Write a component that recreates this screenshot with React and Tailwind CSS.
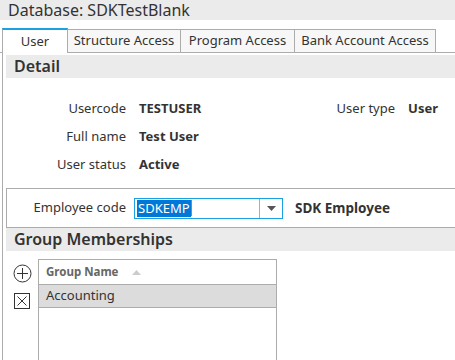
export default function App() {
  const font = { fontFamily: '"Noto Sans", "Open Sans", sans-serif' };
  return (
    <div className="w-[455px] h-[360px] overflow-hidden bg-white text-[#333]" style={font}>
      <div className="h-[20px] bg-[#ebebeb] pl-[8px] text-[16px] leading-[20px]">Database: SDKTestBlank</div>
      <div className="h-[8px]" />
      <div className="flex items-end h-[25px] pl-[2px] border-b border-[#acacac]">
        <div className="h-[25px] w-[66px] border-t-2 border-t-[#1ba1e2] border-l border-r border-[#acacac] bg-white -mb-px flex items-center justify-center text-[13px]">User</div>
        <div className="h-[23px] w-[113px] border-t border-r border-[#acacac] bg-[#f7f7f7] flex items-center justify-center text-[13px]">Structure Access</div>
        <div className="h-[23px] w-[114px] border-t border-r border-[#acacac] bg-[#f7f7f7] flex items-center justify-center text-[13px]">Program Access</div>
        <div className="h-[23px] w-[141px] border-t border-r border-[#acacac] bg-[#f7f7f7] flex items-center justify-center text-[13px]">Bank Account Access</div>
      </div>
      <div className="ml-[2px] border-l border-[#acacac] pl-[3px] pt-[2px] h-[308px]">
        <div className="h-[23px] bg-[#ebebeb] pl-[8px] text-[16px] leading-[23px] font-semibold">Detail</div>
        <div className="flex pt-[21px] h-[110px] text-[13px]">
          <div className="flex flex-col gap-[8px]">
            {[['Usercode', 'TESTUSER'], ['Full name', 'Test User'], ['User status', 'Active']].map(([l, v]) => (
              <div key={l} className="flex h-[20px] items-center">
                <div className="w-[120px] text-right">{l}</div>
                <div className="ml-[13px] font-bold">{v}</div>
              </div>
            ))}
          </div>
          <div className="flex h-[20px] items-center ml-auto mr-[17px]">
            <div>User type</div>
            <div className="ml-[13px] font-bold">User</div>
          </div>
        </div>
        <div className="h-[40px] border-t border-b border-l border-[#acacac] flex items-center text-[13px]">
          <div className="w-[119px] text-right">Employee code</div>
          <div className="ml-[8px] w-[149px] h-[21px] border border-[#1ba1e2] flex">
            <div className="flex-1 flex items-center pl-[2px]">
              <span className="bg-[#0078d7] text-white leading-[17px] px-px">SDKEMP</span>
              <span className="w-px h-[16px] bg-[#e07020]" />
            </div>
            <div className="w-[23px] border-l border-[#acacac] flex items-center justify-center">
              <svg width="9" height="5" viewBox="0 0 9 5"><path d="M0 0h9L4.5 5z" fill="#555" /></svg>
            </div>
          </div>
          <div className="ml-[12px] font-bold text-[13.5px]">SDK Employee</div>
        </div>
        <div className="h-[23px] bg-[#ebebeb] pl-[8px] text-[16px] leading-[23px] font-semibold">Group Memberships</div>
        <div className="flex pt-[8px]">
          <div className="w-[32px] flex flex-col items-center pt-[5px] gap-[10px]">
            <svg width="19" height="19" viewBox="0 0 19 19" fill="none" stroke="#333" strokeWidth="1">
              <circle cx="9.5" cy="9.5" r="8.5" />
              <path d="M9.5 4v11M4 9.5h11" />
            </svg>
            <svg width="16" height="16" viewBox="0 0 16 16" fill="none" stroke="#333" strokeWidth="1" className="-ml-[1px]">
              <rect x="0.5" y="0.5" width="15" height="15" />
              <path d="M3.5 3.5l9 9M12.5 3.5l-9 9" />
            </svg>
          </div>
          <div className="w-[239px] h-[120px] border-l border-t border-r border-[#acacac]">
            <div className="h-[25px] border-b border-[#acacac] flex items-center pl-[7px] text-[11.5px] font-bold text-[#666]">
              Group Name
              <svg className="ml-[14px]" width="9" height="5" viewBox="0 0 9 5"><path d="M0 5h9L4.5 0z" fill="#ccc" /></svg>
            </div>
            <div className="h-[23px] bg-[#dcdcdc] border-b border-[#acacac] flex items-center pl-[7px] text-[13px]">Accounting</div>
          </div>
        </div>
      </div>
    </div>
  );
}
